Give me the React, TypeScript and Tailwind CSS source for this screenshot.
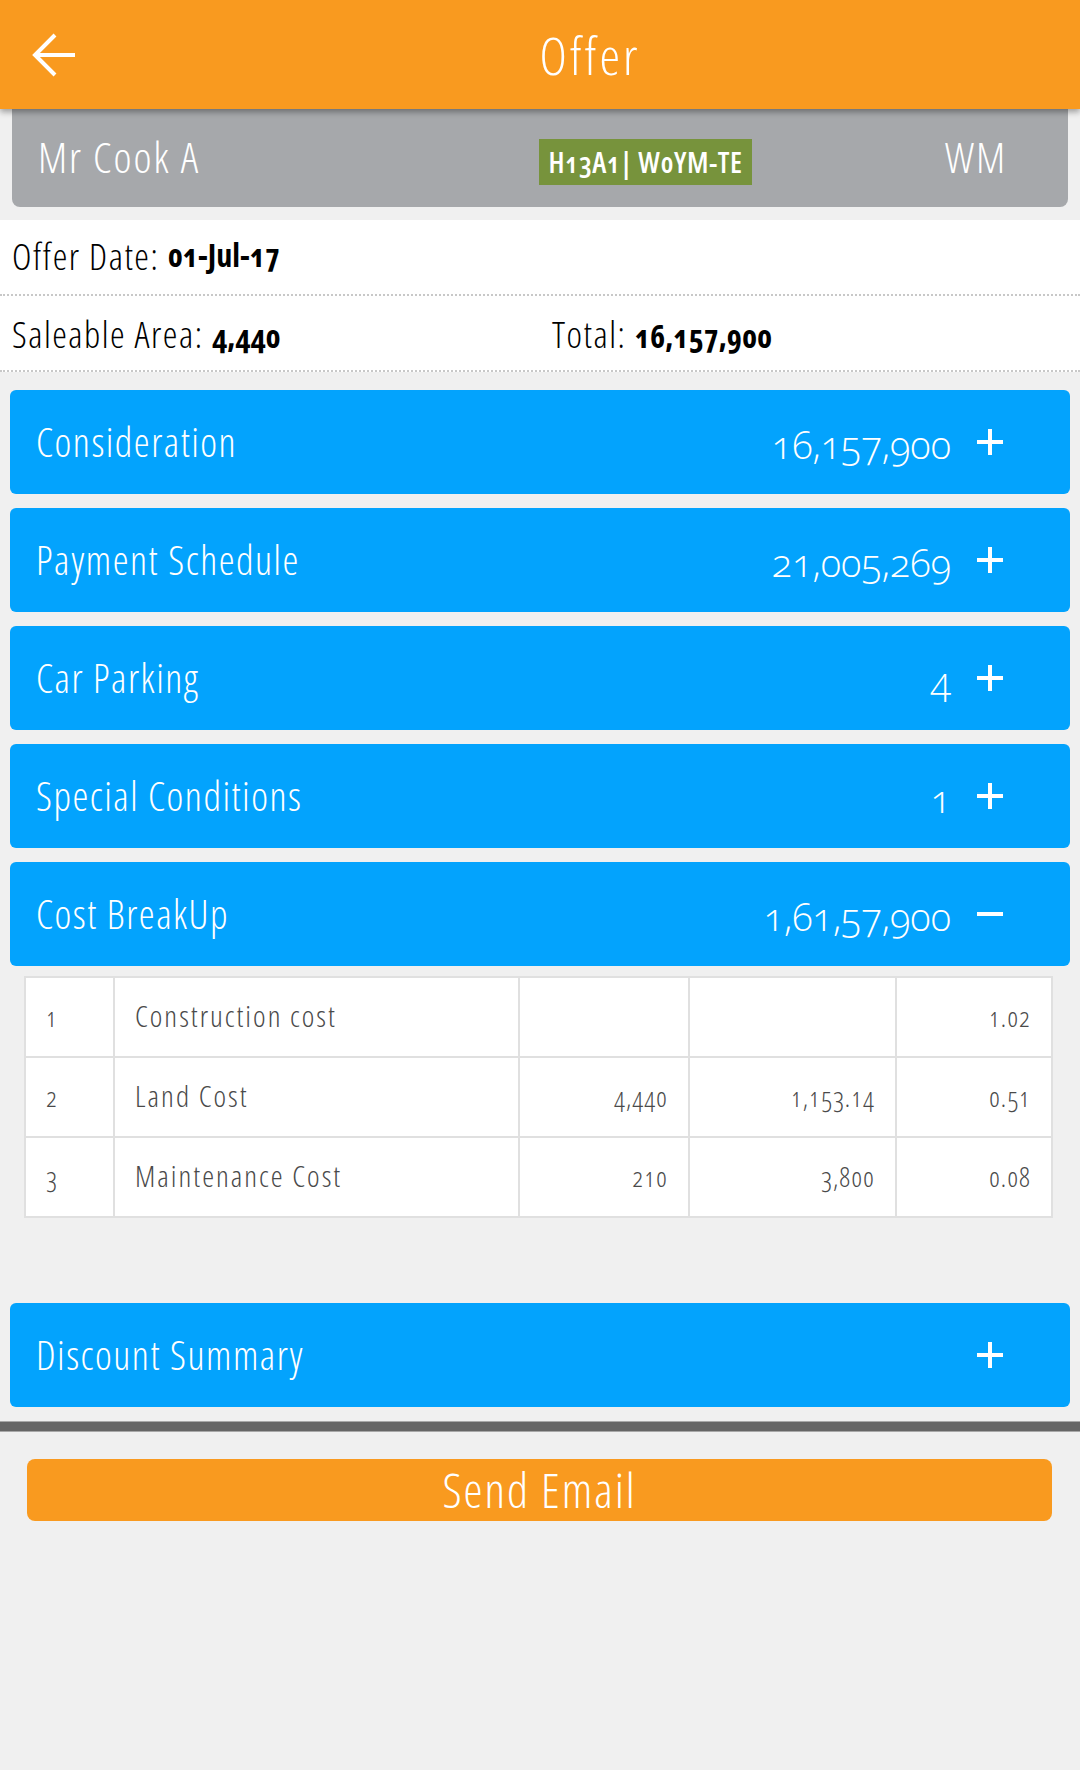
const panels = [
  { label: "Consideration", value: "16,157,900", open: false },
  { label: "Payment Schedule", value: "21,005,269", open: false },
  { label: "Car Parking", value: "4", open: false },
  { label: "Special Conditions", value: "1", open: false },
  { label: "Cost BreakUp", value: "1,61,57,900", open: true },
];

const costRows = [
  { no: "1", name: "Construction cost", area: "", rate: "", pct: "1.02" },
  { no: "2", name: "Land Cost", area: "4,440", rate: "1,153.14", pct: "0.51" },
  { no: "3", name: "Maintenance Cost", area: "210", rate: "3,800", pct: "0.08" },
];

function ToggleIcon({ open }: { open: boolean }) {
  return (
    <svg width="28" height="28" viewBox="0 0 28 28" className="shrink-0">
      <line x1="1" y1="14" x2="27" y2="14" stroke="white" strokeWidth="4" />
      {!open && <line x1="14" y1="1" x2="14" y2="27" stroke="white" strokeWidth="4" />}
    </svg>
  );
}

function Panel({ label, value, open }: { label: string; value?: string; open: boolean }) {
  return (
    <div className="mx-[10px] flex h-[104px] items-center rounded-md bg-[#03a3fd] pl-[26px] pr-[66px] text-white">
      <span className="flex-1 text-[40px] leading-none font-light tracking-[1.5px]">{label}</span>
      {value && (
        <span className="mr-[25px] pt-[4px] text-[38px] leading-none font-light font-stretch-normal">{value}</span>
      )}
      <ToggleIcon open={open} />
    </div>
  );
}

export default function App() {
  return (
    <div className="min-h-screen w-full bg-[#f0f0f0] pb-10 font-['Open_Sans'] font-stretch-[85%] [font-variant-numeric:oldstyle-nums]">
      {/* Header */}
      <header className="relative z-10 flex h-[109px] items-center bg-[#f99a1f] shadow-[0_3px_6px_rgba(0,0,0,0.35)]">
        <div className="w-[100px] pl-[32px]">
          <svg width="44" height="44" viewBox="0 0 44 44">
            <path d="M43 22H3M23 2L3 22l20 20" fill="none" stroke="white" strokeWidth="4" />
          </svg>
        </div>
        <h1 className="flex-1 text-center text-[52px] leading-none font-light tracking-[3px] text-white">Offer</h1>
      </header>

      {/* Customer card */}
      <div className="mx-[12px] flex h-[98px] items-center rounded-b-lg bg-[#a6a8ab] text-white">
        <span className="w-[527px] pb-[4px] pl-[26px] text-[43px] leading-none font-light tracking-[2px]">Mr Cook A</span>
        <span className="mt-[7px] flex h-[46px] w-[213px] items-center justify-center bg-[#77933c] text-[29px] font-semibold tracking-[0.5px]">
          H13A1| W0YM-TE
        </span>
        <span className="flex-1 pr-[61px] pb-[4px] text-right text-[43px] leading-none font-light tracking-[2px]">WM</span>
      </div>

      {/* Offer info */}
      <div className="mt-[13px] bg-white leading-none text-black">
        <div className="flex h-[76px] items-center border-b-2 border-dotted border-[#c8c8c8] px-[12px] pb-[4px]">
          <span className="text-[37px] font-light tracking-[1.5px]">Offer Date:&nbsp;</span>
          <b className="text-[32px] font-bold">01-Jul-17</b>
        </div>
        <div className="flex h-[76px] items-center border-b-2 border-dotted border-[#c8c8c8] px-[12px]">
          <span className="w-[540px]">
            <span className="text-[37px] font-light tracking-[1.5px]">Saleable Area:&nbsp;</span>
            <b className="text-[32px] font-bold">4,440</b>
          </span>
          <span>
            <span className="text-[37px] font-light tracking-[1.5px]">Total:&nbsp;</span>
            <b className="text-[32px] font-bold">16,157,900</b>
          </span>
        </div>
      </div>

      {/* Accordions */}
      <div className="mt-[18px] flex flex-col gap-[14px]">
        {panels.map((p) => (
          <Panel key={p.label} label={p.label} value={p.value} open={p.open} />
        ))}
      </div>

      {/* Cost breakup table */}
      <table className="mx-[24px] mt-[10px] w-[1027px] table-fixed border-collapse bg-white font-light text-[#4a4a4a]">
        <colgroup>
          <col className="w-[89px]" />
          <col className="w-[405px]" />
          <col className="w-[170px]" />
          <col className="w-[207px]" />
          <col className="w-[156px]" />
        </colgroup>
        <tbody>
          {costRows.map((r) => (
            <tr key={r.no} className="h-[80px]">
              <td className="border-2 border-[#e0e0e0] pl-[20px] text-[27px]">{r.no}</td>
              <td className="border-2 border-[#e0e0e0] pb-[4px] pl-[20px] text-[30px] tracking-[2px]">{r.name}</td>
              <td className="border-2 border-[#e0e0e0] pr-[20px] text-right text-[27px] tracking-[1px]">{r.area}</td>
              <td className="border-2 border-[#e0e0e0] pr-[20px] text-right text-[27px] tracking-[1px]">{r.rate}</td>
              <td className="border-2 border-[#e0e0e0] pr-[20px] text-right text-[27px] tracking-[1px]">{r.pct}</td>
            </tr>
          ))}
        </tbody>
      </table>

      <div className="mt-[85px]">
        <Panel label="Discount Summary" open={false} />
      </div>

      <div className="mt-[14px] h-[11px] border-y border-[#a8a8a8] bg-[#666666]" />

      <button className="mx-[27px] mt-[27px] flex h-[62px] w-[1025px] items-center justify-center rounded-lg bg-[#f99a1f] text-[48px] leading-none font-light tracking-[2px] text-white">
        Send Email
      </button>
    </div>
  );
}
